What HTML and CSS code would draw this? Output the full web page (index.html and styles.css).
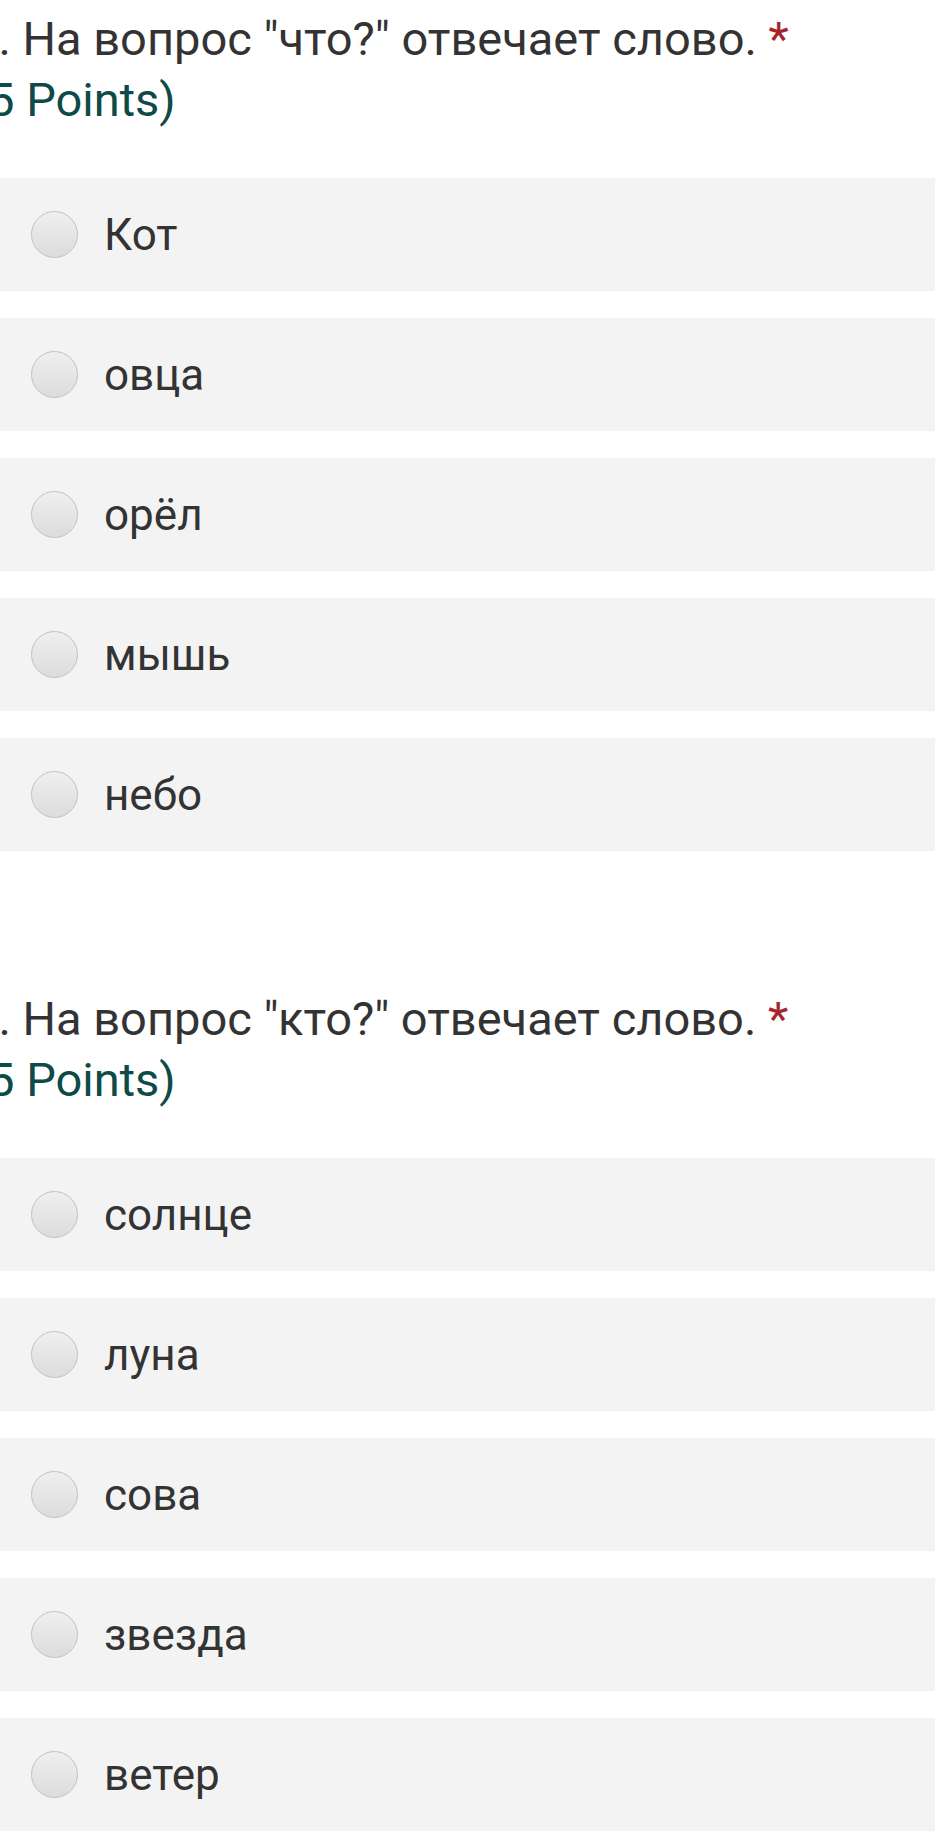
FILE: index.html
```html
<!DOCTYPE html>
<html lang="ru">
<head>
<meta charset="utf-8">
<title>Вопросы</title>
<link rel="stylesheet" href="styles.css">
</head>
<body>
<div class="page">
  <section class="question">
    <div class="q-head">
      <div class="q-title"><span class="q-num">1.</span> <span class="q-text">На вопрос "что?" отвечает слово. <span class="req">*</span></span></div>
      <div class="q-points">(5 Points)</div>
    </div>
    <div class="options">
      <label class="option"><span class="radio"></span><span class="opt-text">Кот</span></label>
      <label class="option"><span class="radio"></span><span class="opt-text">овца</span></label>
      <label class="option"><span class="radio"></span><span class="opt-text">орёл</span></label>
      <label class="option"><span class="radio"></span><span class="opt-text">мышь</span></label>
      <label class="option"><span class="radio"></span><span class="opt-text">небо</span></label>
    </div>
  </section>
  <section class="question">
    <div class="q-head">
      <div class="q-title"><span class="q-num">2.</span> <span class="q-text">На вопрос "кто?" отвечает слово. <span class="req">*</span></span></div>
      <div class="q-points">(5 Points)</div>
    </div>
    <div class="options">
      <label class="option"><span class="radio"></span><span class="opt-text">солнце</span></label>
      <label class="option"><span class="radio"></span><span class="opt-text">луна</span></label>
      <label class="option"><span class="radio"></span><span class="opt-text">сова</span></label>
      <label class="option"><span class="radio"></span><span class="opt-text">звезда</span></label>
      <label class="option"><span class="radio"></span><span class="opt-text">ветер</span></label>
    </div>
  </section>
</div>
</body>
</html>
```
FILE: styles.css
```css
html, body {
  margin: 0;
  padding: 0;
  background: #ffffff;
}
body {
  font-family: Roboto, "Noto Sans", "DejaVu Sans", sans-serif;
  color: #333333;
  overflow: hidden;
}
.page {
  width: 935px;
}
.question {
  display: flex;
  flex-direction: column;
}
.question + .question {
  margin-top: 129px;
}
.q-head {
  padding-top: 8px;
  margin-bottom: 48px;
  margin-left: -28px;
  font-size: 47px;
  line-height: 61px;
  white-space: nowrap;
}
.q-title {
  color: #333333;
}
.req {
  color: #a4262c;
}
.q-points {
  color: #0d4a48;
}
.options {
  display: flex;
  flex-direction: column;
  gap: 27px;
}
.option {
  display: flex;
  align-items: center;
  height: 113px;
  background: #f3f3f3;
  padding-left: 31px;
}
.radio {
  width: 45px;
  height: 45px;
  border-radius: 50%;
  border: 1.5px solid #c2c2c2;
  background: linear-gradient(#efefef, #dcdcdc);
  flex: none;
}
.opt-text {
  margin-left: 26px;
  font-size: 44px;
  color: #333333;
}
```
